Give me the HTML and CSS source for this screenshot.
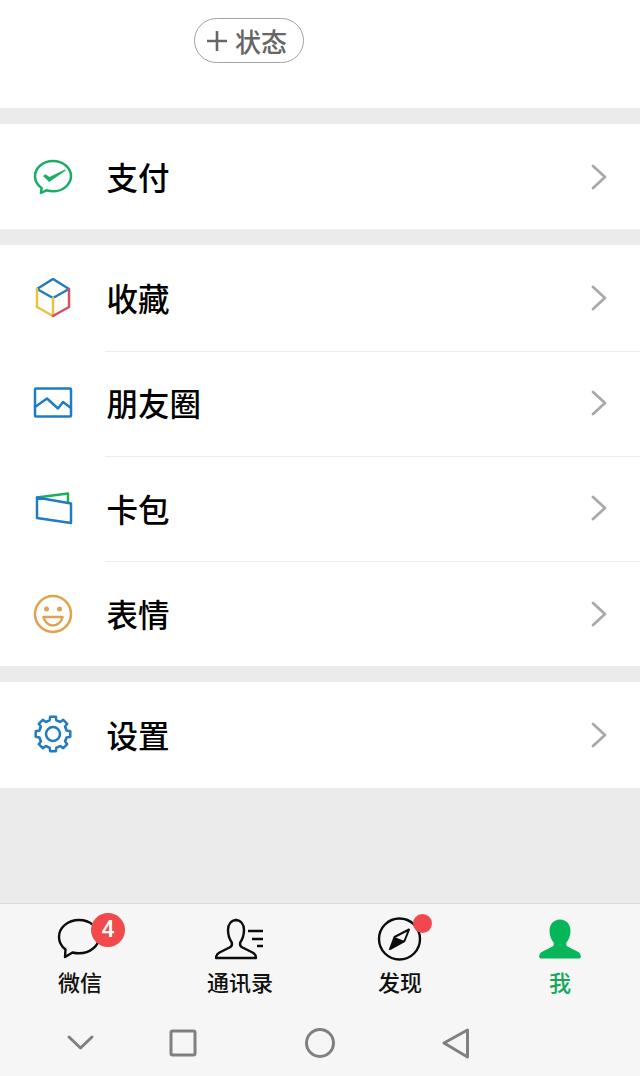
FILE: index.html
```html
<!DOCTYPE html>
<html lang="zh">
<head>
<meta charset="utf-8">
<title>我</title>
<link rel="stylesheet" href="styles.css">
</head>
<body>
<div class="app">
  <header class="top">
    <button class="status">
      <svg class="status-plus" viewBox="0 0 22 22"><path d="M11 1v20M1 11h20"/></svg>
      <span>状态</span>
    </button>
  </header>

  <section class="group">
    <div class="row">
      <svg class="row-icon" viewBox="33 157 40 40">
        <path class="s-green" d="M53 161c-10 0-18 6.900-18 15.300 0 4.800 2.500 8.900 6.600 11.800l-.7 4.900 5.500-2.700c2 .6 4.300 1 6.600 1 10 0 18-6.900 18-15 0-8.400-8-15.300-18-15.300z"/>
        <path class="f-green" d="M43 176l2.500-1.800 4 2.700 15.500-7.400.7 1-16.400 11.500z"/>
      </svg>
      <span class="label">支付</span>
      <svg class="chev" viewBox="0 0 16 26"><path d="M2 2l12 11L2 24"/></svg>
    </div>
  </section>

  <section class="group">
    <div class="row">
      <svg class="row-icon" viewBox="33 279 40 40">
        <path class="s-blue" d="M37 290l16-10 16 10-16 9z"/>
        <path class="s-yellow" d="M37 290v18l16 9v-18"/>
        <path class="s-red" d="M69 290v18l-16 9"/>
      </svg>
      <span class="label">收藏</span>
      <svg class="chev" viewBox="0 0 16 26"><path d="M2 2l12 11L2 24"/></svg>
    </div>
    <div class="row">
      <svg class="row-icon" viewBox="33 384 40 40">
        <rect class="s-blue" x="35" y="389.500" width="36" height="28" rx="1"/>
        <path class="s-blue" d="M35 408l12-8.500 11 10 5-6.500 8 6"/>
      </svg>
      <span class="label">朋友圈</span>
      <svg class="chev" viewBox="0 0 16 26"><path d="M2 2l12 11L2 24"/></svg>
    </div>
    <div class="row">
      <svg class="row-icon" viewBox="33 489 40 40">
        <path class="s-green" d="M37 498.500l31-4v8"/>
        <path class="s-blue" d="M37 498.500l34 6V524l-34-5z"/>
      </svg>
      <span class="label">卡包</span>
      <svg class="chev" viewBox="0 0 16 26"><path d="M2 2l12 11L2 24"/></svg>
    </div>
    <div class="row">
      <svg class="row-icon" viewBox="33 594 40 40">
        <circle class="s-orange" cx="53" cy="614" r="18"/>
        <circle class="f-orange" cx="46.500" cy="609" r="2.500"/>
        <circle class="f-orange" cx="59.500" cy="609" r="2.500"/>
        <path class="s-orange" d="M43.500 617h19c-1 5-5 8.500-9.500 8.500s-8.500-3.500-9.500-8.500z"/>
      </svg>
      <span class="label">表情</span>
      <svg class="chev" viewBox="0 0 16 26"><path d="M2 2l12 11L2 24"/></svg>
    </div>
  </section>

  <section class="group">
    <div class="row">
      <svg class="row-icon" viewBox="-20 -19 40 40">
        <defs><path id="tooth" d="M-5.360-12.930L-3.390-13.580-2.820-17.300H2.820L3.390-13.580 5.360-12.930"/></defs>
        <circle class="s-blue" r="7"/>
        <use class="s-blue" href="#tooth"/>
        <use class="s-blue" href="#tooth" transform="rotate(45)"/>
        <use class="s-blue" href="#tooth" transform="rotate(90)"/>
        <use class="s-blue" href="#tooth" transform="rotate(135)"/>
        <use class="s-blue" href="#tooth" transform="rotate(180)"/>
        <use class="s-blue" href="#tooth" transform="rotate(225)"/>
        <use class="s-blue" href="#tooth" transform="rotate(270)"/>
        <use class="s-blue" href="#tooth" transform="rotate(315)"/>
      </svg>
      <span class="label">设置</span>
      <svg class="chev" viewBox="0 0 16 26"><path d="M2 2l12 11L2 24"/></svg>
    </div>
  </section>

  <div class="spacer"></div>

  <footer class="bottom">
    <nav class="tabs">
      <div class="tab">
        <span class="tab-art">
          <svg class="tab-icon" viewBox="55 915 50 46">
            <path class="s-black" d="M79 920c-11 0-20 7.500-20 17 0 5 2.500 9.500 6.500 12.500l-.5 7.500 7.500-4.500c2 .5 4.300.8 6.500.8 11 0 20-7.300 20-16.300 0-9.500-9-17-20-17z"/>
          </svg>
          <span class="badge">4</span>
        </span>
        <span class="tab-label">微信</span>
      </div>
      <div class="tab">
        <span class="tab-art">
          <svg class="tab-icon" viewBox="215 915 50 46">
            <path class="s-black" d="M237 920c-5.500 0-9 4-9 10 0 5 1.500 9 3.500 12 1 2.500 0 4.500-2 5.500l-10 5c-3 1.500-3.500 3-3.500 5.500h40c0-2.500-.5-4-3.500-5.500l-10-5c-2-1-3-3-2-5.500 2-3 3.500-7 3.500-12 0-6-3.500-10-9-10"/>
            <path class="s-black-butt" d="M248 931h15M252 939h11M257 946h6"/>
          </svg>
        </span>
        <span class="tab-label">通讯录</span>
      </div>
      <div class="tab">
        <span class="tab-art">
          <svg class="tab-icon" viewBox="375 915 50 46">
            <circle class="s-black" cx="399.500" cy="939" r="20.500"/>
            <path class="s-black-thin" d="M409 929.500l-4.500 11.500-14.500 8 4.500-12z"/>
            <path class="f-black" d="M404.500 941l-14.500 8 4.500-12z"/>
          </svg>
          <span class="dot"></span>
        </span>
        <span class="tab-label">发现</span>
      </div>
      <div class="tab">
        <span class="tab-art">
          <svg class="tab-icon" viewBox="535 915 50 46">
            <path class="f-tab-green" d="M560 919.500c-6.500 0-10.500 5-10.500 11.500 0 5 2 9 4 11.500 1 2 0 3.500-2 4.500l-9 4.500c-2.500 1.200-3.300 3-3.300 5.200 0 1 .6 1.800 2 1.800h37.600c1.400 0 2-.8 2-1.800 0-2.200-.8-4-3.300-5.200l-9-4.500c-2-1-3-2.500-2-4.500 2-2.500 4-6.500 4-11.500 0-6.500-4-11.500-10.500-11.500z"/>
          </svg>
        </span>
        <span class="tab-label tab-label-on">我</span>
      </div>
    </nav>
    <div class="sysbar">
      <svg class="sys sys-back" viewBox="0 0 32 32"><path d="M5 10l11.500 11L28 10"/></svg>
      <svg class="sys sys-home" viewBox="0 0 32 32"><rect x="4" y="4" width="24" height="24" rx="1.500"/></svg>
      <svg class="sys sys-circle" viewBox="0 0 32 32"><circle cx="16" cy="16" r="13.500"/></svg>
      <svg class="sys sys-tri" viewBox="0 0 32 32"><path d="M4 16L27.500 3v27z"/></svg>
    </div>
  </footer>
</div>
</body>
</html>
```

FILE: styles.css
```css
* { box-sizing: border-box; }
html, body { margin: 0; padding: 0; }
body {
  width: 640px;
  height: 1076px;
  overflow: hidden;
  font-family: "Noto Sans CJK SC", "Liberation Sans", sans-serif;
  background: #ebebeb;
}
.app { display: flex; flex-direction: column; height: 1076px; }

.top { height: 108px; background: #fff; padding: 18px 0 0 194px; }
.status {
  display: flex;
  align-items: center;
  gap: 7px;
  width: 110px;
  height: 45px;
  margin: 0;
  padding: 0 0 0 11px;
  border: 1px solid #a3a3a3;
  border-radius: 23px;
  background: #fff;
  color: #666;
  font: 500 26px/1 "Noto Sans CJK SC", sans-serif;
}
.status-plus { width: 22px; height: 22px; flex: none; }
.status-plus path { stroke: #666; stroke-width: 2.600; fill: none; }

.group { background: #fff; margin-top: 16px; }
.row {
  position: relative;
  display: flex;
  align-items: center;
  height: 105.250px;
  padding: 0 33px;
}
.row + .row::before {
  content: "";
  position: absolute;
  top: 0;
  left: 105px;
  right: 0;
  height: 1px;
  background: #ececec;
}
.row-icon { width: 40px; height: 40px; flex: none; margin-right: 33.500px; }
.label { flex: 1; font-size: 31.500px; line-height: 1; font-weight: 500; color: #000; }
.chev { width: 16px; height: 26px; flex: none; }
.chev path { fill: none; stroke: #a9a9a9; stroke-width: 2.800; stroke-linecap: round; stroke-linejoin: round; }

.s-green, .s-blue, .s-yellow, .s-red, .s-orange {
  fill: none;
  stroke-width: 2.500;
  stroke-linejoin: round;
  stroke-linecap: round;
}
.s-green { stroke: #1aad63; }
.s-blue { stroke: #1f7cc2; }
.s-yellow { stroke: #e9c240; }
.s-red { stroke: #d9505a; }
.s-orange { stroke: #e1a24e; }
.f-green { fill: #1aad63; }
.f-orange { fill: #e1a24e; }

.spacer { flex: 1; }

.bottom { height: 173px; background: #f6f6f6; border-top: 1px solid #dcdcdc; display: flex; flex-direction: column; }
.tabs { display: grid; grid-template-columns: repeat(4, 160px); height: 123px; padding-top: 11px; }
.tab { display: flex; flex-direction: column; align-items: center; }
.tab-art { position: relative; display: block; width: 50px; height: 46px; }
.tab-icon { display: block; width: 50px; height: 46px; }
.tab-label { margin-top: 7px; font-size: 22px; line-height: 26px; font-weight: 500; color: #111; }
.tab-label-on { color: #16a85a; }

.badge {
  position: absolute;
  left: 36px;
  top: -2px;
  width: 34px;
  height: 34px;
  border-radius: 50%;
  background: #f04a4c;
  color: #fff;
  font: 500 23px/34px "Roboto", sans-serif;
  text-align: center;
}
.dot {
  position: absolute;
  left: 38px;
  top: -1px;
  width: 19px;
  height: 19px;
  border-radius: 50%;
  background: #f2474f;
}

.s-black, .s-black-butt, .s-black-thin { fill: none; stroke: #0c0c0c; stroke-linejoin: round; }
.s-black { stroke-width: 2.400; }
.s-black-butt { stroke-width: 2.400; }
.s-black-thin { stroke-width: 2; }
.f-black { fill: #0c0c0c; }
.f-tab-green { fill: #08b65a; }

.sysbar { display: flex; padding: 0 0 0 64px; }
.sys { width: 32px; height: 32px; flex: none; }
.sys path, .sys rect, .sys circle { fill: none; stroke: #808080; stroke-width: 3; stroke-linejoin: round; stroke-linecap: round; }
.sys-home { margin-left: 71px; }
.sys-circle { margin-left: 105px; }
.sys-tri { margin-left: 104px; }
```
